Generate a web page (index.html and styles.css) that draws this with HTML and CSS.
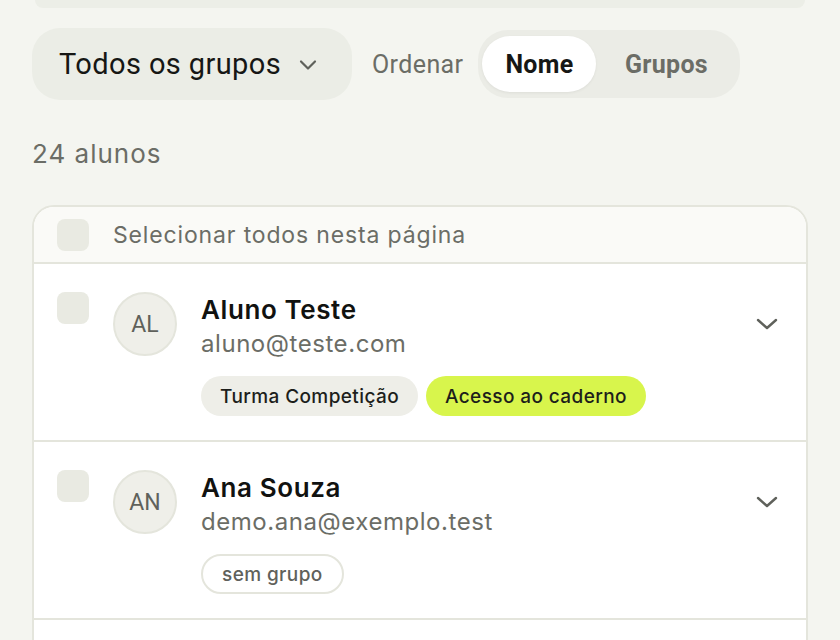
FILE: index.html
```html
<!DOCTYPE html>
<html lang="pt">
<head>
<meta charset="utf-8">
<title>Alunos</title>
<link rel="stylesheet" href="styles.css">
</head>
<body>
<div class="page">
  <div class="topbar"></div>
  <div class="toolbar">
    <button class="select">
      <span>Todos os grupos</span>
      <svg class="chev" width="20" height="12" viewBox="0 0 20 12"><path d="M3 2.5 L10 9.5 L17 2.5" fill="none" stroke="#5f615b" stroke-width="2.2" stroke-linecap="round" stroke-linejoin="round"/></svg>
    </button>
    <span class="sort-label">Ordenar</span>
    <div class="segmented">
      <span class="seg active">Nome</span>
      <span class="seg">Grupos</span>
    </div>
  </div>
  <div class="count">24 alunos</div>
  <div class="card">
    <div class="card-head">
      <span class="checkbox"></span>
      <span class="head-text">Selecionar todos nesta página</span>
    </div>
    <div class="row">
      <span class="checkbox"></span>
      <span class="avatar">AL</span>
      <div class="info">
        <div class="name">Aluno Teste</div>
        <div class="email">aluno@teste.com</div>
        <div class="tags">
          <span class="tag">Turma Competição</span>
          <span class="tag lime">Acesso ao caderno</span>
        </div>
      </div>
      <span class="expand"><svg width="24" height="14" viewBox="0 0 24 14"><path d="M3 3 L12 11 L21 3" fill="none" stroke="#5f615b" stroke-width="2.4" stroke-linecap="round" stroke-linejoin="round"/></svg></span>
    </div>
    <div class="row">
      <span class="checkbox"></span>
      <span class="avatar">AN</span>
      <div class="info">
        <div class="name">Ana Souza</div>
        <div class="email">demo.ana@exemplo.test</div>
        <div class="tags">
          <span class="tag outline">sem grupo</span>
        </div>
      </div>
      <span class="expand"><svg width="24" height="14" viewBox="0 0 24 14"><path d="M3 3 L12 11 L21 3" fill="none" stroke="#5f615b" stroke-width="2.4" stroke-linecap="round" stroke-linejoin="round"/></svg></span>
    </div>
    <div class="row"></div>
  </div>
</div>
</body>
</html>
```
FILE: styles.css
```css
* { box-sizing: border-box; }
html, body { margin: 0; padding: 0; }
body {
  background: #f4f5f0;
  font-family: Inter, "Noto Sans", sans-serif;
  color: #161715;
  width: 840px;
  height: 640px;
  overflow: hidden;
}
.page {
  padding: 0 32px;
  height: 640px;
  overflow: hidden;
}
.topbar {
  height: 8px;
  margin: 0 3px;
  background: #eceee7;
  border-radius: 0 0 24px 24px;
}
.toolbar {
  margin-top: 20px;
  display: flex;
  align-items: center;
}
.select {
  height: 72px;
  width: 320px;
  border: none;
  border-radius: 28px;
  background: #ebede6;
  display: flex;
  align-items: center;
  justify-content: space-between;
  padding: 0 34px 0 27px;
  font-family: Roboto, "Liberation Sans", sans-serif;
  font-size: 29px;
  letter-spacing: 0.4px;
  color: #161715;
}
.chev { margin-top: 2px; flex: none; }
.sort-label {
  margin-left: 20px;
  margin-right: 15px;
  font-family: Roboto, "Liberation Sans", sans-serif;
  font-size: 25px;
  letter-spacing: 0.4px;
  color: #6b6d66;
}
.segmented {
  height: 68px;
  width: 262px;
  padding: 6px 4px;
  border-radius: 30px;
  background: #ebece6;
  display: flex;
  align-items: center;
}
.seg {
  height: 56px;
  display: flex;
  align-items: center;
  justify-content: center;
  font-family: Roboto, "Liberation Sans", sans-serif;
  font-weight: 700;
  font-size: 25px;
  letter-spacing: 0.3px;
  color: #6b6d66;
  border-radius: 28px;
}
.seg.active {
  width: 114px;
  background: #ffffff;
  color: #161715;
  box-shadow: 0 1px 3px rgba(0,0,0,0.06);
}
.seg:not(.active) { flex: 1; }
.count {
  margin-top: 34px;
  line-height: 40px;
  font-size: 26px;
  letter-spacing: 1px;
  color: #6b6d66;
}
.card {
  margin-top: 31px;
  width: 776px;
  border: 2px solid #e4e5dc;
  border-radius: 22px;
  background: #ffffff;
  overflow: hidden;
}
.card-head {
  height: 57px;
  display: flex;
  align-items: center;
  padding: 0 23px;
  background: #fafaf7;
  border-bottom: 2px solid #e4e5dc;
}
.checkbox {
  width: 32px;
  height: 32px;
  flex: none;
  border-radius: 8px;
  background: #e9eae2;
}
.head-text {
  margin-left: 24px;
  font-size: 23px;
  letter-spacing: 0.85px;
  color: #6b6d66;
}
.row {
  display: flex;
  align-items: flex-start;
  padding: 28px 27px 24px 23px;
  border-bottom: 2px solid #e4e5dc;
  background: #ffffff;
}
.avatar {
  width: 64px;
  height: 64px;
  flex: none;
  margin-left: 24px;
  border-radius: 50%;
  background: #efefe9;
  border: 2px solid #e4e5dc;
  display: flex;
  align-items: center;
  justify-content: center;
  font-family: Roboto, "Liberation Sans", sans-serif;
  font-size: 23px;
  color: #5f615b;
}
.info {
  flex: 1;
  margin-left: 24px;
}
.name {
  line-height: 36px;
  font-size: 26px;
  font-weight: 600;
  letter-spacing: 0.6px;
  color: #111210;
}
.email {
  line-height: 32px;
  font-size: 24px;
  letter-spacing: 0.55px;
  color: #6b6d66;
}
.tags {
  margin-top: 16px;
  display: flex;
  gap: 8px;
}
.tag {
  height: 40px;
  padding: 0 19px;
  border-radius: 20px;
  background: #eeeee8;
  display: flex;
  align-items: center;
  font-size: 19px;
  font-weight: 500;
  letter-spacing: 0.4px;
  color: #1d1e1b;
}
.tag.lime { background: #d8f54c; }
.tag.outline {
  background: #ffffff;
  border: 2px solid #e4e5dc;
  color: #5f615b;
}
.expand {
  height: 64px;
  display: flex;
  align-items: center;
}
```
